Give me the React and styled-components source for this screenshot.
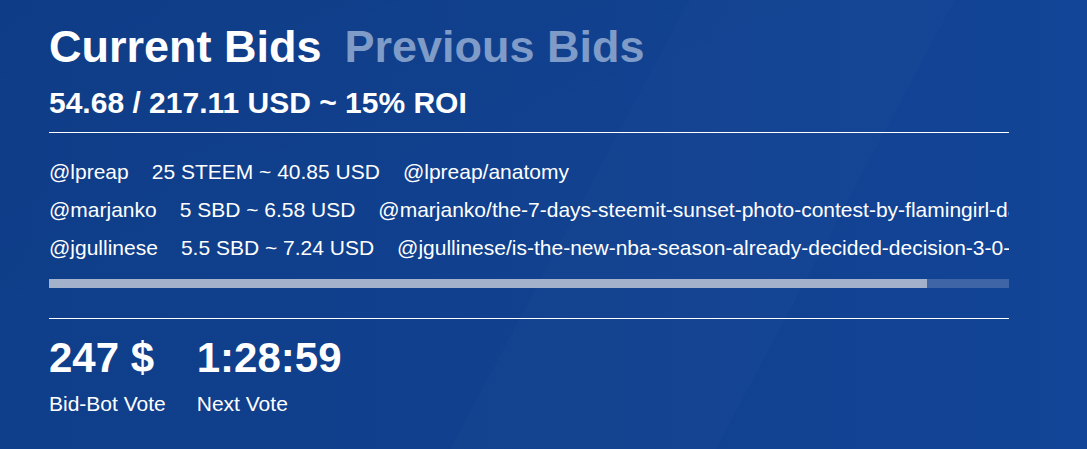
import React from 'react';
import styled, { createGlobalStyle } from 'styled-components';

const GlobalStyle = createGlobalStyle`
  html, body {
    margin: 0;
    padding: 0;
    height: 100%;
  }
  body {
    font-family: 'Liberation Sans', Arial, sans-serif;
    background: #11408e;
  }
`;

const Page = styled.div`
  min-height: 449px;
  box-sizing: border-box;
  padding: 24px 0 0 49px;
  color: #fff;
  background:
    linear-gradient(118deg, rgba(255,255,255,0) 0%, rgba(255,255,255,0) 52%, rgba(255,255,255,0.012) 52%, rgba(255,255,255,0.012) 72%, rgba(0,0,0,0) 72%),
    linear-gradient(160deg, rgba(0,0,0,0.03) 0%, rgba(0,0,0,0) 40%),
    linear-gradient(90deg, #0f3e8a 0%, #11418f 55%, #124497 100%);
`;

const Panel = styled.div`
  width: 960px;
`;

const Tabs = styled.div`
  display: flex;
  gap: 23px;
`;

const Tab = styled.h1`
  margin: 0;
  font-size: 45px;
  line-height: 45px;
  font-weight: 700;
  color: ${({ active }) => (active ? '#ffffff' : '#7f9bc8')};
  cursor: pointer;
`;

const Summary = styled.h2`
  margin: 19px 0 0;
  font-size: 30px;
  line-height: 30px;
  font-weight: 700;
`;

const Rule = styled.hr`
  margin: ${({ top }) => top}px 0 0;
  border: 0;
  border-top: 1px solid #ffffff;
  height: 0;
`;

const BidList = styled.div`
  margin-top: 20px;
  display: flex;
  flex-direction: column;
`;

// long post links are cut at the panel edge, as in the live page
const BidRow = styled.div`
  display: flex;
  gap: 23px;
  font-size: 21px;
  line-height: 38px;
  white-space: nowrap;
  overflow: hidden;
`;

const Progress = styled.div`
  margin-top: 12px;
  height: 9px;
  background: #3f65a7;
`;

const ProgressFill = styled.div`
  height: 100%;
  background: #a3b1cb;
`;

const Stats = styled.div`
  margin-top: 18px;
  display: flex;
  gap: 31px;
`;

const Stat = styled.div`
  display: flex;
  flex-direction: column;
`;

const StatValue = styled.div`
  font-size: 42px;
  line-height: 42px;
  font-weight: 700;
`;

const StatLabel = styled.div`
  margin-top: 14px;
  font-size: 21px;
  line-height: 21px;
`;

const bids = [
  { user: '@lpreap', amount: '25 STEEM ~ 40.85 USD', post: '@lpreap/anatomy' },
  { user: '@marjanko', amount: '5 SBD ~ 6.58 USD', post: '@marjanko/the-7-days-steemit-sunset-photo-contest-by-flamingirl-day-3' },
  { user: '@jgullinese', amount: '5.5 SBD ~ 7.24 USD', post: '@jgullinese/is-the-new-nba-season-already-decided-decision-3-0-2017' },
];

const App = () => {
  const fill = 0.915;

  return (
    <>
      <GlobalStyle />
      <Page>
        <Panel>
          <Tabs>
            <Tab active>Current Bids</Tab>
            <Tab>Previous Bids</Tab>
          </Tabs>
          <Summary>54.68 / 217.11 USD ~ 15% ROI</Summary>
          <Rule top={14} />
          <BidList>
            {bids.map(b => (
              <BidRow key={b.user}>
                <span>{b.user}</span>
                <span>{b.amount}</span>
                <span>{b.post}</span>
              </BidRow>
            ))}
          </BidList>
          <Progress>
            <ProgressFill style={{ width: `${fill * 100}%` }} />
          </Progress>
          <Rule top={30} />
          <Stats>
            <Stat>
              <StatValue>247 $</StatValue>
              <StatLabel>Bid-Bot Vote</StatLabel>
            </Stat>
            <Stat>
              <StatValue>1:28:59</StatValue>
              <StatLabel>Next Vote</StatLabel>
            </Stat>
          </Stats>
        </Panel>
      </Page>
    </>
  );
};

export default App;
